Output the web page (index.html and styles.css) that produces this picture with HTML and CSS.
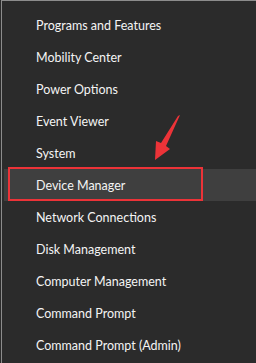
FILE: index.html
```html
<!DOCTYPE html>
<html lang="en">

<head>
    <title>Quick Link Menu</title>
    <meta charset="UTF-8">
    <link rel="stylesheet" href="styles.css">
</head>

<body>
    <div class="qm-menu">
        <div class="qm-item">Programs and Features</div>
        <div class="qm-item">Mobility Center</div>
        <div class="qm-item">Power Options</div>
        <div class="qm-item">Event Viewer</div>
        <div class="qm-item">System</div>
        <div class="qm-item qm-active">
            Device Manager
            <div class="qm-mark"></div>
        </div>
        <div class="qm-item">Network Connections</div>
        <div class="qm-item">Disk Management</div>
        <div class="qm-item">Computer Management</div>
        <div class="qm-item">Command Prompt</div>
        <div class="qm-item">Command Prompt (Admin)</div>

        <svg class="qm-arrow" width="256" height="363" viewBox="0 0 256 363">
            <polygon points="180,115 166,146 170,149 155,160 156,141 161,143 178,116" fill="#ec3338" />
        </svg>
    </div>
</body>

</html>
```

FILE: styles.css
```css
* {
    box-sizing: border-box;
    font-family: Lato, 'Noto Sans', sans-serif;
}

body {
    margin: 0;
    width: 256px;
    height: 363px;
    overflow: hidden;
    background-color: #2b2b2b;
}

.qm-menu {
    position: relative;
    height: 363px;
    margin-left: 1px;
    padding-top: 8px;
    border-top: 1px solid #8c8c8c;
    border-left: 1px solid #8c8c8c;
    display: flex;
    flex-direction: column;
}

.qm-item {
    position: relative;
    height: 32px;
    padding-left: 34px;
    display: flex;
    align-items: center;
    font-size: 12.5px;
    color: #f4f4f4;
    white-space: nowrap;
}

.qm-active {
    margin-left: 2px;
    padding-left: 32px;
    background-color: #3f3f3f;
}

.qm-mark {
    position: absolute;
    top: -2px;
    left: 4px;
    width: 195px;
    height: 34px;
    border: 2px solid #ec3338;
}

.qm-arrow {
    position: absolute;
    top: -1px;
    left: -2px;
    pointer-events: none;
}
```
